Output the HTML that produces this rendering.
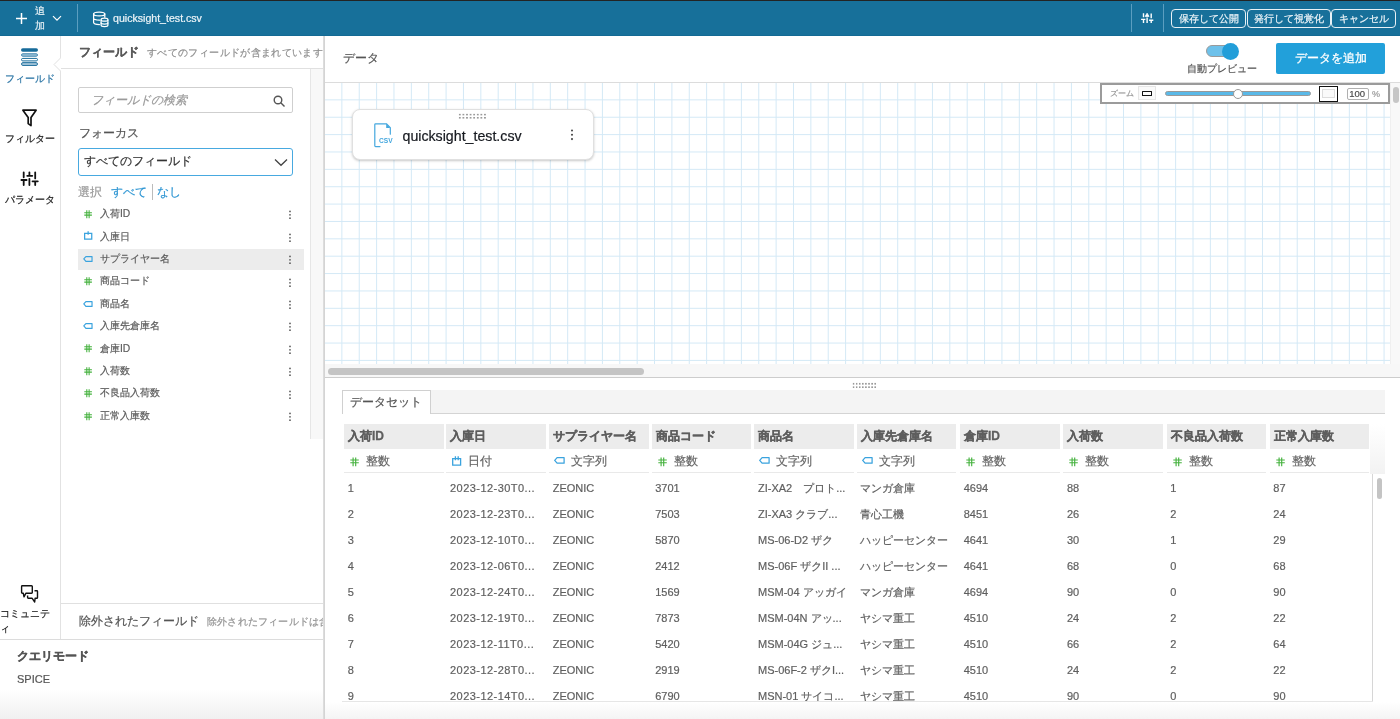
<!DOCTYPE html>
<html><head><meta charset="utf-8"><style>
*{box-sizing:border-box;margin:0;padding:0}
html,body{width:1400px;height:719px;overflow:hidden;background:#fff;font-family:"Liberation Sans",sans-serif;color:#555555}
#wrap{position:absolute;left:0;top:0;width:1400px;height:719px;overflow:hidden;will-change:transform;-webkit-text-stroke-width:0.2px}
.a{position:absolute;white-space:nowrap}
/* top bar */
#top{position:absolute;left:0;top:0;width:1400px;height:36px;background:#17709a;border-top:1px solid #232323;border-bottom:1px solid #136a94;z-index:5}
#top .sep{position:absolute;top:3px;width:1px;height:28px;background:#5b9ec0}
#top .btn{position:absolute;top:8px;height:18.8px;border:1.5px solid #e8f1f6;border-radius:4px;color:#eef5f9;font-size:9.7px;line-height:17.5px;text-align:center}
/* nav */
#nav{position:absolute;left:0;top:35px;width:61px;height:604px;border-right:1px solid #e2e2e2;background:#fff}
.nl{position:absolute;left:0;width:60px;text-align:center;font-size:10px;line-height:12px;color:#222}
/* fields panel */
#fp{position:absolute;left:61px;top:35px;width:262px;height:604px;background:#fff}
.fi{position:absolute;left:17px;width:226px;height:21px}
.fi.sel{background:#ececec}
.fi .ti{position:absolute;left:6px;top:6px}
.fi .str{left:5px;top:7.5px}
.fi .date{top:5px}
.fi span{position:absolute;left:22px;top:-0.7px;font-size:10.3px;line-height:21px;color:#5c5c5c}
.keb{position:absolute;left:210px;top:5.5px}
/* main */
#main{position:absolute;left:323px;top:35px;width:2px;height:684px;background:linear-gradient(to right,#e0e0e0,#d0d0d0)}
.grid{position:absolute;left:325px;top:83px}
.th{position:absolute;top:424px;height:25px;background:#ececec;font-size:12px;font-weight:bold;line-height:25px;padding-left:4px;color:#5e5e5e;white-space:nowrap;overflow:hidden;-webkit-text-stroke-width:0.3px}
.tt{position:absolute;top:449px;height:24px;border-bottom:1px solid #e9e9e9;font-size:12px;line-height:23px;white-space:nowrap}
.tt .ti{position:absolute;left:6px;top:7.5px}
.tt .str{left:5px;top:8px}
.tt .date{top:6.5px}
.tt span{position:absolute;left:22px;top:1px;color:#666}
.td{position:absolute;height:26px;font-size:11px;line-height:26px;color:#5f5f5f;white-space:nowrap}

</style></head><body><div id="wrap">
<div id="top">
  <svg class="a" style="left:15px;top:11px" width="13" height="13" viewBox="0 0 13 13"><path d="M6.5 1V12M1 6.5H12" stroke="#fff" stroke-width="1.5"/></svg>
  <div class="a" style="left:35px;top:3px;width:12px;font-size:10px;line-height:14.5px;color:#e6f0f5;white-space:normal">追<br>加</div>
  <svg class="a" style="left:52px;top:14px" width="10" height="7" viewBox="0 0 10 7"><path d="M1 1.2L5 5.2L9 1.2" stroke="#fff" stroke-width="1.2" fill="none"/></svg>
  <div class="sep" style="left:77px"></div>
  <svg class="a" style="left:88px;top:6px" width="24" height="24" viewBox="0 0 24 24"><g stroke="#fff" stroke-width="1.25" fill="none" stroke-linecap="round"><ellipse cx="11.2" cy="6.9" rx="5.6" ry="1.9"/><path d="M5.6 6.9V15.6Q5.6 17.5 11.5 17.6M5.6 11.3Q5.6 13 11.5 13.2M16.8 6.9V10.2"/><path d="M13.1 12.6Q13.1 11.2 16.5 11.2Q19.9 11.2 19.9 12.6V18.3Q19.9 19.6 16.5 19.6Q13.1 19.6 13.1 18.3Z" fill="#17709a"/><path d="M13.1 13Q13.1 14.2 16.5 14.2Q19.9 14.2 19.9 13M13.1 15.9Q13.1 17 16.5 17Q19.9 17 19.9 15.9"/></g></svg>
  <div class="a" style="left:113px;top:10px;font-size:10.6px;line-height:14px;color:#eef5f9">quicksight_test.csv</div>
  <div class="sep" style="left:1131px"></div>
  <svg class="a" style="left:1138px;top:9px" width="18" height="16" viewBox="0 0 18 16"><g stroke="#fff" stroke-width="1.4" fill="none"><path d="M5.5 3.2V7.2M3.1 9.4H7.4M5.5 9.4V13M9.1 7.5V13M13.2 3.5V8.2M11.1 10.3H15.3M13.2 10.3V13"/><path d="M7.2 6.4L9.1 3.2L11 6.4Z" fill="#fff" stroke-width="0.8"/></g></svg>
  <div class="sep" style="left:1163px"></div>
  <div class="btn" style="left:1171px;width:75px">保存して公開</div>
  <div class="btn" style="left:1246.5px;width:84px">発行して視覚化</div>
  <div class="btn" style="left:1331px;width:65px">キャンセル</div>
</div>

<div id="nav">
  <svg class="a" style="left:20px;top:12px" width="19" height="20" viewBox="0 0 19 20"><rect x="1" y="1.3" width="17" height="3.5" rx="1.75" fill="#176b9a"/><rect x="1.5" y="6.7" width="16" height="2.6" rx="1.3" fill="#93bcd3" stroke="#3f86b0" stroke-width="0.9"/><rect x="1.5" y="11.4" width="16" height="2.5" rx="1.25" fill="#fff" stroke="#176b9a" stroke-width="1"/><rect x="1.5" y="15.6" width="16" height="2.9" rx="1.45" fill="#9cc0d6" stroke="#2a77a3" stroke-width="1"/></svg>
  <div class="nl" style="top:38px;color:#2a74a4">フィールド</div>
  <svg class="a" style="left:18px;top:71px" width="24" height="24" viewBox="0 0 24 24"><path d="M4.9 4.2H18.1L13 11.4V19.6L10.2 17.6V11.4Z" stroke="#111" stroke-width="1.7" fill="none" stroke-linejoin="round"/></svg>
  <div class="nl" style="top:98px">フィルター</div>
  <svg class="a" style="left:18px;top:133px" width="24" height="20" viewBox="0 0 24 20"><g stroke="#111" stroke-width="1.8" stroke-linecap="round" fill="none"><path d="M5.7 4.3V9.3M3.4 12H8.6M5.7 12V17M11.4 4.3V7.6M9.2 7.8H14.3M11.4 10.8V17M17.2 4.3V10.4M14.5 13.3H19.8M17.2 13.3V17"/></g></svg>
  <div class="nl" style="top:159px">パラメータ</div>
  <svg class="a" style="left:20px;top:549px" width="19" height="20" viewBox="0 0 19 20"><g stroke="#111" stroke-width="1.4" fill="none" stroke-linejoin="round"><path d="M2 1.8H11.5Q12.3 1.8 12.3 2.6V8.6Q12.3 9.2 11.5 9.2H6L4 12.8L3.3 9.2H2.3Q1.6 9.2 1.6 8.5V2.5Q1.6 1.8 2.3 1.8Z"/><path d="M14.5 6.8H16.8Q17.5 6.8 17.5 7.5V13.4Q17.5 14.2 16.8 14.2H15.1L14.7 18L12 14.2H8.3Q7.6 14.2 7.6 13.5V11.6"/></g></svg>
  <div class="nl" style="top:572px;text-align:left;left:0;width:58px;white-space:normal;line-height:14.5px;letter-spacing:0">コミュニテ<br>ィ</div>
</div>
<!-- notch -->
<svg class="a" style="left:53px;top:57px" width="9" height="16" viewBox="0 0 9 16"><path d="M8 0.5L1 7.5L8 14.5" fill="#fff" stroke="#e0e0e0" stroke-width="1"/><rect x="8" y="0" width="2" height="16" fill="#fff"/></svg>

<div id="fp">
  <div class="a" style="left:18px;top:10px;font-size:12px;font-weight:bold;line-height:15px;color:#5a5a5a;-webkit-text-stroke-width:0.25px">フィールド</div>
  <div class="a" style="left:86px;top:11px;font-size:10px;letter-spacing:0.36px;line-height:14px;color:#8f8f8f">すべてのフィールドが含まれています</div>
  <div class="a" style="left:0;top:33px;width:262px;height:1px;background:#e0e0e0"></div>
  <div class="a" style="left:249px;top:34px;width:13px;height:370px;background:#f8f8f8;border-left:1px solid #e6e6e6"></div>
  <div class="a" style="left:17px;top:52px;width:215px;height:26px;border:1px solid #cfcfcf;border-radius:2px"></div>
  <div class="a" style="left:30px;top:57px;font-size:12px;line-height:16px;font-style:italic;color:#9a9a9a">フィールドの検索</div>
  <svg class="a" style="left:212px;top:60px" width="13" height="13" viewBox="0 0 13 13"><g stroke="#555" stroke-width="1.4" fill="none"><circle cx="5" cy="5" r="3.8"/><path d="M7.8 7.8L11.5 11.5"/></g></svg>
  <div class="a" style="left:18px;top:91px;font-size:12px;line-height:15px;color:#555555">フォーカス</div>
  <div class="a" style="left:17px;top:112.5px;width:215px;height:28.5px;border:1.2px solid #47a9e0;border-radius:3px"></div>
  <div class="a" style="left:23px;top:118px;font-size:12px;line-height:17px;color:#333">すべてのフィールド</div>
  <svg class="a" style="left:213px;top:123px" width="14" height="9" viewBox="0 0 14 9"><path d="M1 1.5L7 7.3L13 1.5" stroke="#444" stroke-width="1.3" fill="none"/></svg>
  <div class="a" style="left:17px;top:150px;font-size:12px;line-height:15px;color:#999">選択</div>
  <div class="a" style="left:50px;top:150px;font-size:12px;line-height:15px;color:#2f96d3">すべて</div>
  <div class="a" style="left:91px;top:149px;width:1px;height:16px;background:#bbb"></div>
  <div class="a" style="left:96px;top:150px;font-size:12px;line-height:15px;color:#2f96d3">なし</div>
</div>
<div id="fields" class="a" style="left:61px;top:0"><div class="fi" style="top:203.9px"><svg class="ti num" width="9" height="9" viewBox="0 0 10 10"><g stroke="#46b23f" stroke-width="1.2" fill="none"><path d="M3.1 0.4V9.2M5.7 0.4V9.2M0.3 3H8.8M0.3 5.7H8.8"/></g></svg><span>入荷ID</span><svg class="keb" width="4" height="12" viewBox="0 0 4 12"><g fill="#555"><circle cx="2" cy="2.4" r="0.85"/><circle cx="2" cy="5.8" r="0.85"/><circle cx="2" cy="9.2" r="0.85"/></g></svg></div><div class="fi" style="top:226.3px"><svg class="ti date" width="9" height="9" viewBox="0 0 10 10"><g stroke="#3aa3de" stroke-width="1.4" fill="none"><path d="M0.7 2.6H8.6V9.1H0.7Z"/><path d="M4.6 0.2V4.2"/></g></svg><span>入庫日</span><svg class="keb" width="4" height="12" viewBox="0 0 4 12"><g fill="#555"><circle cx="2" cy="2.4" r="0.85"/><circle cx="2" cy="5.8" r="0.85"/><circle cx="2" cy="9.2" r="0.85"/></g></svg></div><div class="fi sel" style="top:248.7px"><svg class="ti str" width="10" height="7" viewBox="0 0 11 8"><path d="M0.7 3.4L3.1 0.7H10.1V6.2H3.1Z" stroke="#3aa3de" stroke-width="1.35" fill="none" stroke-linejoin="round"/></svg><span>サプライヤー名</span><svg class="keb" width="4" height="12" viewBox="0 0 4 12"><g fill="#555"><circle cx="2" cy="2.4" r="0.85"/><circle cx="2" cy="5.8" r="0.85"/><circle cx="2" cy="9.2" r="0.85"/></g></svg></div><div class="fi" style="top:271.1px"><svg class="ti num" width="9" height="9" viewBox="0 0 10 10"><g stroke="#46b23f" stroke-width="1.2" fill="none"><path d="M3.1 0.4V9.2M5.7 0.4V9.2M0.3 3H8.8M0.3 5.7H8.8"/></g></svg><span>商品コード</span><svg class="keb" width="4" height="12" viewBox="0 0 4 12"><g fill="#555"><circle cx="2" cy="2.4" r="0.85"/><circle cx="2" cy="5.8" r="0.85"/><circle cx="2" cy="9.2" r="0.85"/></g></svg></div><div class="fi" style="top:293.5px"><svg class="ti str" width="10" height="7" viewBox="0 0 11 8"><path d="M0.7 3.4L3.1 0.7H10.1V6.2H3.1Z" stroke="#3aa3de" stroke-width="1.35" fill="none" stroke-linejoin="round"/></svg><span>商品名</span><svg class="keb" width="4" height="12" viewBox="0 0 4 12"><g fill="#555"><circle cx="2" cy="2.4" r="0.85"/><circle cx="2" cy="5.8" r="0.85"/><circle cx="2" cy="9.2" r="0.85"/></g></svg></div><div class="fi" style="top:315.9px"><svg class="ti str" width="10" height="7" viewBox="0 0 11 8"><path d="M0.7 3.4L3.1 0.7H10.1V6.2H3.1Z" stroke="#3aa3de" stroke-width="1.35" fill="none" stroke-linejoin="round"/></svg><span>入庫先倉庫名</span><svg class="keb" width="4" height="12" viewBox="0 0 4 12"><g fill="#555"><circle cx="2" cy="2.4" r="0.85"/><circle cx="2" cy="5.8" r="0.85"/><circle cx="2" cy="9.2" r="0.85"/></g></svg></div><div class="fi" style="top:338.3px"><svg class="ti num" width="9" height="9" viewBox="0 0 10 10"><g stroke="#46b23f" stroke-width="1.2" fill="none"><path d="M3.1 0.4V9.2M5.7 0.4V9.2M0.3 3H8.8M0.3 5.7H8.8"/></g></svg><span>倉庫ID</span><svg class="keb" width="4" height="12" viewBox="0 0 4 12"><g fill="#555"><circle cx="2" cy="2.4" r="0.85"/><circle cx="2" cy="5.8" r="0.85"/><circle cx="2" cy="9.2" r="0.85"/></g></svg></div><div class="fi" style="top:360.7px"><svg class="ti num" width="9" height="9" viewBox="0 0 10 10"><g stroke="#46b23f" stroke-width="1.2" fill="none"><path d="M3.1 0.4V9.2M5.7 0.4V9.2M0.3 3H8.8M0.3 5.7H8.8"/></g></svg><span>入荷数</span><svg class="keb" width="4" height="12" viewBox="0 0 4 12"><g fill="#555"><circle cx="2" cy="2.4" r="0.85"/><circle cx="2" cy="5.8" r="0.85"/><circle cx="2" cy="9.2" r="0.85"/></g></svg></div><div class="fi" style="top:383.1px"><svg class="ti num" width="9" height="9" viewBox="0 0 10 10"><g stroke="#46b23f" stroke-width="1.2" fill="none"><path d="M3.1 0.4V9.2M5.7 0.4V9.2M0.3 3H8.8M0.3 5.7H8.8"/></g></svg><span>不良品入荷数</span><svg class="keb" width="4" height="12" viewBox="0 0 4 12"><g fill="#555"><circle cx="2" cy="2.4" r="0.85"/><circle cx="2" cy="5.8" r="0.85"/><circle cx="2" cy="9.2" r="0.85"/></g></svg></div><div class="fi" style="top:405.5px"><svg class="ti num" width="9" height="9" viewBox="0 0 10 10"><g stroke="#46b23f" stroke-width="1.2" fill="none"><path d="M3.1 0.4V9.2M5.7 0.4V9.2M0.3 3H8.8M0.3 5.7H8.8"/></g></svg><span>正常入庫数</span><svg class="keb" width="4" height="12" viewBox="0 0 4 12"><g fill="#555"><circle cx="2" cy="2.4" r="0.85"/><circle cx="2" cy="5.8" r="0.85"/><circle cx="2" cy="9.2" r="0.85"/></g></svg></div></div>
<div class="a" style="left:61px;top:603px;width:262px;height:1px;background:#e0e0e0"></div>
<div class="a" style="left:79px;top:614px;font-size:12px;line-height:15px;color:#555555">除外されたフィールド</div>
<div class="a" style="left:207px;top:615px;width:116px;overflow:hidden;font-size:10px;letter-spacing:0.2px;line-height:14px;color:#959595">除外されたフィールドは含まれていません</div>
<div class="a" style="left:0;top:639px;width:323px;height:1px;background:#dcdcdc"></div>
<div class="a" style="left:17px;top:649px;font-size:12px;font-weight:bold;line-height:15px;color:#555555;-webkit-text-stroke-width:0.3px">クエリモード</div>
<div class="a" style="left:17px;top:672px;font-size:11px;line-height:14px;color:#555555">SPICE</div>
<div class="a" style="left:0;top:690px;width:323px;height:29px;background:linear-gradient(#fff,#f0f0f0)"></div>

<div id="main">
</div>
<div class="a" style="left:343px;top:50px;font-size:12px;line-height:16px;color:#555555">データ</div>
<!-- toggle -->
<div class="a" style="left:1206px;top:45px;width:30px;height:12px;border-radius:6px;background:#6ec1ea;border:1px solid #9a9a9a"></div>
<div class="a" style="left:1221.5px;top:42.5px;width:17.4px;height:17.4px;border-radius:50%;background:#229ed9"></div>
<div class="a" style="left:1186.5px;top:61.5px;font-size:10.2px;line-height:13px;color:#555555">自動プレビュー</div>
<div class="a" style="left:1276px;top:43px;width:109px;height:30.5px;background:#22a0da;border-radius:2px;color:#fff;font-size:12px;line-height:30px;text-align:center;-webkit-text-stroke:0.3px #fff">データを追加</div>
<div class="a" style="left:325px;top:82px;width:1075px;height:1px;background:#dcdcdc"></div>
<svg class="grid" width="1065" height="281" viewBox="0 0 1065 281"><g stroke="#d4e9f6" stroke-width="1"><line x1="-0.50" y1="0" x2="-0.50" y2="281"/><line x1="16.87" y1="0" x2="16.87" y2="281"/><line x1="34.24" y1="0" x2="34.24" y2="281"/><line x1="51.61" y1="0" x2="51.61" y2="281"/><line x1="68.98" y1="0" x2="68.98" y2="281"/><line x1="86.35" y1="0" x2="86.35" y2="281"/><line x1="103.72" y1="0" x2="103.72" y2="281"/><line x1="121.09" y1="0" x2="121.09" y2="281"/><line x1="138.46" y1="0" x2="138.46" y2="281"/><line x1="155.83" y1="0" x2="155.83" y2="281"/><line x1="173.20" y1="0" x2="173.20" y2="281"/><line x1="190.57" y1="0" x2="190.57" y2="281"/><line x1="207.94" y1="0" x2="207.94" y2="281"/><line x1="225.31" y1="0" x2="225.31" y2="281"/><line x1="242.68" y1="0" x2="242.68" y2="281"/><line x1="260.05" y1="0" x2="260.05" y2="281"/><line x1="277.42" y1="0" x2="277.42" y2="281"/><line x1="294.79" y1="0" x2="294.79" y2="281"/><line x1="312.16" y1="0" x2="312.16" y2="281"/><line x1="329.53" y1="0" x2="329.53" y2="281"/><line x1="346.90" y1="0" x2="346.90" y2="281"/><line x1="364.27" y1="0" x2="364.27" y2="281"/><line x1="381.64" y1="0" x2="381.64" y2="281"/><line x1="399.01" y1="0" x2="399.01" y2="281"/><line x1="416.38" y1="0" x2="416.38" y2="281"/><line x1="433.75" y1="0" x2="433.75" y2="281"/><line x1="451.12" y1="0" x2="451.12" y2="281"/><line x1="468.49" y1="0" x2="468.49" y2="281"/><line x1="485.86" y1="0" x2="485.86" y2="281"/><line x1="503.23" y1="0" x2="503.23" y2="281"/><line x1="520.60" y1="0" x2="520.60" y2="281"/><line x1="537.97" y1="0" x2="537.97" y2="281"/><line x1="555.34" y1="0" x2="555.34" y2="281"/><line x1="572.71" y1="0" x2="572.71" y2="281"/><line x1="590.08" y1="0" x2="590.08" y2="281"/><line x1="607.45" y1="0" x2="607.45" y2="281"/><line x1="624.82" y1="0" x2="624.82" y2="281"/><line x1="642.19" y1="0" x2="642.19" y2="281"/><line x1="659.56" y1="0" x2="659.56" y2="281"/><line x1="676.93" y1="0" x2="676.93" y2="281"/><line x1="694.30" y1="0" x2="694.30" y2="281"/><line x1="711.67" y1="0" x2="711.67" y2="281"/><line x1="729.04" y1="0" x2="729.04" y2="281"/><line x1="746.41" y1="0" x2="746.41" y2="281"/><line x1="763.78" y1="0" x2="763.78" y2="281"/><line x1="781.15" y1="0" x2="781.15" y2="281"/><line x1="798.52" y1="0" x2="798.52" y2="281"/><line x1="815.89" y1="0" x2="815.89" y2="281"/><line x1="833.26" y1="0" x2="833.26" y2="281"/><line x1="850.63" y1="0" x2="850.63" y2="281"/><line x1="868.00" y1="0" x2="868.00" y2="281"/><line x1="885.37" y1="0" x2="885.37" y2="281"/><line x1="902.74" y1="0" x2="902.74" y2="281"/><line x1="920.11" y1="0" x2="920.11" y2="281"/><line x1="937.48" y1="0" x2="937.48" y2="281"/><line x1="954.85" y1="0" x2="954.85" y2="281"/><line x1="972.22" y1="0" x2="972.22" y2="281"/><line x1="989.59" y1="0" x2="989.59" y2="281"/><line x1="1006.96" y1="0" x2="1006.96" y2="281"/><line x1="1024.33" y1="0" x2="1024.33" y2="281"/><line x1="1041.70" y1="0" x2="1041.70" y2="281"/><line x1="1059.07" y1="0" x2="1059.07" y2="281"/><line x1="0" y1="-0.50" x2="1065" y2="-0.50"/><line x1="0" y1="16.87" x2="1065" y2="16.87"/><line x1="0" y1="34.24" x2="1065" y2="34.24"/><line x1="0" y1="51.61" x2="1065" y2="51.61"/><line x1="0" y1="68.98" x2="1065" y2="68.98"/><line x1="0" y1="86.35" x2="1065" y2="86.35"/><line x1="0" y1="103.72" x2="1065" y2="103.72"/><line x1="0" y1="121.09" x2="1065" y2="121.09"/><line x1="0" y1="138.46" x2="1065" y2="138.46"/><line x1="0" y1="155.83" x2="1065" y2="155.83"/><line x1="0" y1="173.20" x2="1065" y2="173.20"/><line x1="0" y1="190.57" x2="1065" y2="190.57"/><line x1="0" y1="207.94" x2="1065" y2="207.94"/><line x1="0" y1="225.31" x2="1065" y2="225.31"/><line x1="0" y1="242.68" x2="1065" y2="242.68"/><line x1="0" y1="260.05" x2="1065" y2="260.05"/><line x1="0" y1="277.42" x2="1065" y2="277.42"/></g></svg>
<!-- zoom control -->
<div class="a" style="left:1099.5px;top:83px;width:290px;height:20.5px;background:#fff;border:2px solid #9b9b9b"></div>
<div class="a" style="left:1109.5px;top:87.5px;font-size:8px;line-height:12px;color:#9a9a9a">ズーム</div>
<div class="a" style="left:1137.5px;top:86px;width:18px;height:14px;border:1px solid #e6e6e6;background:#fafafa"></div>
<div class="a" style="left:1141.5px;top:90.5px;width:10px;height:5.5px;border:1.6px solid #111;border-radius:0.5px"></div>
<div class="a" style="left:1164.5px;top:91px;width:146px;height:5px;border-radius:3px;background:#5ab9e8;border:1px solid #999"></div>
<div class="a" style="left:1232.5px;top:88.5px;width:10px;height:10px;border-radius:50%;background:#fff;border:1px solid #999"></div>
<div class="a" style="left:1319px;top:86px;width:19px;height:15.5px;border:1.5px solid #111;background:#fff"></div>
<div class="a" style="left:1322px;top:89px;width:13px;height:9px;border:1px solid #ddd;background:#fafafa"></div>
<div class="a" style="left:1347px;top:87.5px;width:21.5px;height:12px;border:1px solid #b0b0b0;border-radius:2px;font-size:9.5px;line-height:10px;text-align:right;padding-right:2.5px;color:#4a4a4a">100</div>
<div class="a" style="left:1372px;top:88px;font-size:9px;line-height:12px;color:#999">%</div>
<!-- v scrollbar of canvas -->
<div class="a" style="left:1390px;top:83px;width:10px;height:281px;background:#f8f8f8;border-left:1px solid #efefef"></div>
<div class="a" style="left:1393px;top:86.5px;width:6px;height:16px;border-radius:3px;background:#c6c6c6"></div>
<!-- card -->
<div class="a" style="left:351.5px;top:109px;width:242px;height:51.3px;background:#fff;border-radius:8px;border:1px solid #e0e0e0;box-shadow:0 1px 2.5px rgba(0,0,0,0.22)"></div>
<div class="a" style="left:458px;top:112.7px;width:28.8px;height:6.4px;background:radial-gradient(circle,#9a9a9a 0.75px,transparent 1px) 0 0/3.6px 3.2px"></div>
<svg class="a" style="left:372px;top:122px" width="24" height="27" viewBox="0 0 24 27"><g fill="none" stroke="#44a7de" stroke-width="1.2" stroke-linejoin="round" stroke-linecap="round"><path d="M8 24.6H3.6Q2.8 24.6 2.8 23.8V2.6Q2.8 1.8 3.6 1.8H14.4L18.3 5.6V12.2"/></g><path d="M14.2 1.8L18.3 5.9H14.2Z" fill="#44a7de"/><text x="7" y="20.8" font-family="Liberation Sans" font-weight="bold" font-size="6.6" fill="#44a7de">CSV</text></svg>
<div class="a" style="left:402.5px;top:127px;font-size:14.2px;line-height:18px;color:#16191f">quicksight_test.csv</div>
<svg class="a" style="left:570px;top:128px" width="4" height="14" viewBox="0 0 4 14"><g fill="#4a4a4a"><circle cx="2" cy="2.5" r="1.05"/><circle cx="2" cy="6.8" r="1.05"/><circle cx="2" cy="11.1" r="1.05"/></g></svg>
<!-- h scroll -->
<div class="a" style="left:325px;top:364px;width:1075px;height:13px;background:#f7f7f7"></div>
<div class="a" style="left:327.5px;top:368px;width:316px;height:7px;border-radius:4px;background:#c4c4c4"></div>
<div class="a" style="left:325px;top:377px;width:1075px;height:1px;background:#cdcdcd"></div>
<div class="a" style="left:852px;top:381.5px;width:25px;height:6px;background:radial-gradient(circle,#999 0.8px,transparent 1px) 0 0/3.1px 3.5px"></div>
<!-- tab bar -->
<div class="a" style="left:342px;top:390px;width:1043px;height:24px;background:#f4f4f4;border-bottom:1px solid #d4d4d4"></div>
<div class="a" style="left:342px;top:390px;width:89px;height:24px;background:#fff;border:1px solid #d0d0d0;border-bottom:none"></div>
<div class="a" style="left:350px;top:394px;font-size:12px;line-height:16px;color:#555555">データセット</div>
<div class="th" style="left:344px;width:99.6px">入荷ID</div><div class="tt" style="left:344px;width:99.6px"><svg class="ti num" width="10" height="10" viewBox="0 0 10 10"><g stroke="#46b23f" stroke-width="1.15" fill="none"><path d="M3.1 0.4V9.2M5.7 0.4V9.2M0.3 3H8.8M0.3 5.7H8.8"/></g></svg><span>整数</span></div><div class="td" style="left:347.7px;top:475px">1</div><div class="td" style="left:347.7px;top:501px">2</div><div class="td" style="left:347.7px;top:527px">3</div><div class="td" style="left:347.7px;top:553px">4</div><div class="td" style="left:347.7px;top:579px">5</div><div class="td" style="left:347.7px;top:605px">6</div><div class="td" style="left:347.7px;top:631px">7</div><div class="td" style="left:347.7px;top:657px">8</div><div class="td" style="left:347.7px;top:683px">9</div><div class="th" style="left:446.3px;width:99.6px">入庫日</div><div class="tt" style="left:446.3px;width:99.6px"><svg class="ti date" width="10" height="10" viewBox="0 0 10 10"><g stroke="#3aa3de" stroke-width="1.3" fill="none"><path d="M0.7 2.6H8.6V9.1H0.7Z"/><path d="M3.4 0.2V4.2M6.2 0.2V4.2"/></g></svg><span>日付</span></div><div class="td" style="left:450.0px;top:475px;letter-spacing:0.45px">2023-12-30T0...</div><div class="td" style="left:450.0px;top:501px;letter-spacing:0.45px">2023-12-23T0...</div><div class="td" style="left:450.0px;top:527px;letter-spacing:0.45px">2023-12-10T0...</div><div class="td" style="left:450.0px;top:553px;letter-spacing:0.45px">2023-12-06T0...</div><div class="td" style="left:450.0px;top:579px;letter-spacing:0.45px">2023-12-24T0...</div><div class="td" style="left:450.0px;top:605px;letter-spacing:0.45px">2023-12-19T0...</div><div class="td" style="left:450.0px;top:631px;letter-spacing:0.45px">2023-12-11T0...</div><div class="td" style="left:450.0px;top:657px;letter-spacing:0.45px">2023-12-28T0...</div><div class="td" style="left:450.0px;top:683px;letter-spacing:0.45px">2023-12-14T0...</div><div class="th" style="left:549px;width:99.6px">サプライヤー名</div><div class="tt" style="left:549px;width:99.6px"><svg class="ti str" width="11" height="8" viewBox="0 0 11 8"><path d="M0.7 3.4L3.1 0.7H10.1V6.2H3.1Z" stroke="#3aa3de" stroke-width="1.25" fill="none" stroke-linejoin="round"/></svg><span>文字列</span></div><div class="td" style="left:552.7px;top:475px">ZEONIC</div><div class="td" style="left:552.7px;top:501px">ZEONIC</div><div class="td" style="left:552.7px;top:527px">ZEONIC</div><div class="td" style="left:552.7px;top:553px">ZEONIC</div><div class="td" style="left:552.7px;top:579px">ZEONIC</div><div class="td" style="left:552.7px;top:605px">ZEONIC</div><div class="td" style="left:552.7px;top:631px">ZEONIC</div><div class="td" style="left:552.7px;top:657px">ZEONIC</div><div class="td" style="left:552.7px;top:683px">ZEONIC</div><div class="th" style="left:651.5px;width:99.6px">商品コード</div><div class="tt" style="left:651.5px;width:99.6px"><svg class="ti num" width="10" height="10" viewBox="0 0 10 10"><g stroke="#46b23f" stroke-width="1.15" fill="none"><path d="M3.1 0.4V9.2M5.7 0.4V9.2M0.3 3H8.8M0.3 5.7H8.8"/></g></svg><span>整数</span></div><div class="td" style="left:655.2px;top:475px">3701</div><div class="td" style="left:655.2px;top:501px">7503</div><div class="td" style="left:655.2px;top:527px">5870</div><div class="td" style="left:655.2px;top:553px">2412</div><div class="td" style="left:655.2px;top:579px">1569</div><div class="td" style="left:655.2px;top:605px">7873</div><div class="td" style="left:655.2px;top:631px">5420</div><div class="td" style="left:655.2px;top:657px">2919</div><div class="td" style="left:655.2px;top:683px">6790</div><div class="th" style="left:754.3px;width:99.6px">商品名</div><div class="tt" style="left:754.3px;width:99.6px"><svg class="ti str" width="11" height="8" viewBox="0 0 11 8"><path d="M0.7 3.4L3.1 0.7H10.1V6.2H3.1Z" stroke="#3aa3de" stroke-width="1.25" fill="none" stroke-linejoin="round"/></svg><span>文字列</span></div><div class="td" style="left:758.0px;top:475px">ZI-XA2　プロト...</div><div class="td" style="left:758.0px;top:501px">ZI-XA3 クラブ...</div><div class="td" style="left:758.0px;top:527px">MS-06-D2 ザク</div><div class="td" style="left:758.0px;top:553px">MS-06F ザクII ...</div><div class="td" style="left:758.0px;top:579px">MSM-04 アッガイ</div><div class="td" style="left:758.0px;top:605px">MSM-04N アッ...</div><div class="td" style="left:758.0px;top:631px">MSM-04G ジュ...</div><div class="td" style="left:758.0px;top:657px">MS-06F-2 ザクI...</div><div class="td" style="left:758.0px;top:683px">MSN-01 サイコ...</div><div class="th" style="left:856.7px;width:99.6px">入庫先倉庫名</div><div class="tt" style="left:856.7px;width:99.6px"><svg class="ti str" width="11" height="8" viewBox="0 0 11 8"><path d="M0.7 3.4L3.1 0.7H10.1V6.2H3.1Z" stroke="#3aa3de" stroke-width="1.25" fill="none" stroke-linejoin="round"/></svg><span>文字列</span></div><div class="td" style="left:860.4000000000001px;top:475px">マンガ倉庫</div><div class="td" style="left:860.4000000000001px;top:501px">青心工機</div><div class="td" style="left:860.4000000000001px;top:527px">ハッピーセンター</div><div class="td" style="left:860.4000000000001px;top:553px">ハッピーセンター</div><div class="td" style="left:860.4000000000001px;top:579px">マンガ倉庫</div><div class="td" style="left:860.4000000000001px;top:605px">ヤシマ重工</div><div class="td" style="left:860.4000000000001px;top:631px">ヤシマ重工</div><div class="td" style="left:860.4000000000001px;top:657px">ヤシマ重工</div><div class="td" style="left:860.4000000000001px;top:683px">ヤシマ重工</div><div class="th" style="left:960px;width:99.6px">倉庫ID</div><div class="tt" style="left:960px;width:99.6px"><svg class="ti num" width="10" height="10" viewBox="0 0 10 10"><g stroke="#46b23f" stroke-width="1.15" fill="none"><path d="M3.1 0.4V9.2M5.7 0.4V9.2M0.3 3H8.8M0.3 5.7H8.8"/></g></svg><span>整数</span></div><div class="td" style="left:963.7px;top:475px">4694</div><div class="td" style="left:963.7px;top:501px">8451</div><div class="td" style="left:963.7px;top:527px">4641</div><div class="td" style="left:963.7px;top:553px">4641</div><div class="td" style="left:963.7px;top:579px">4694</div><div class="td" style="left:963.7px;top:605px">4510</div><div class="td" style="left:963.7px;top:631px">4510</div><div class="td" style="left:963.7px;top:657px">4510</div><div class="td" style="left:963.7px;top:683px">4510</div><div class="th" style="left:1063.2px;width:99.6px">入荷数</div><div class="tt" style="left:1063.2px;width:99.6px"><svg class="ti num" width="10" height="10" viewBox="0 0 10 10"><g stroke="#46b23f" stroke-width="1.15" fill="none"><path d="M3.1 0.4V9.2M5.7 0.4V9.2M0.3 3H8.8M0.3 5.7H8.8"/></g></svg><span>整数</span></div><div class="td" style="left:1066.9px;top:475px">88</div><div class="td" style="left:1066.9px;top:501px">26</div><div class="td" style="left:1066.9px;top:527px">30</div><div class="td" style="left:1066.9px;top:553px">68</div><div class="td" style="left:1066.9px;top:579px">90</div><div class="td" style="left:1066.9px;top:605px">24</div><div class="td" style="left:1066.9px;top:631px">66</div><div class="td" style="left:1066.9px;top:657px">24</div><div class="td" style="left:1066.9px;top:683px">90</div><div class="th" style="left:1166.5px;width:99.6px">不良品入荷数</div><div class="tt" style="left:1166.5px;width:99.6px"><svg class="ti num" width="10" height="10" viewBox="0 0 10 10"><g stroke="#46b23f" stroke-width="1.15" fill="none"><path d="M3.1 0.4V9.2M5.7 0.4V9.2M0.3 3H8.8M0.3 5.7H8.8"/></g></svg><span>整数</span></div><div class="td" style="left:1170.2px;top:475px">1</div><div class="td" style="left:1170.2px;top:501px">2</div><div class="td" style="left:1170.2px;top:527px">1</div><div class="td" style="left:1170.2px;top:553px">0</div><div class="td" style="left:1170.2px;top:579px">0</div><div class="td" style="left:1170.2px;top:605px">2</div><div class="td" style="left:1170.2px;top:631px">2</div><div class="td" style="left:1170.2px;top:657px">2</div><div class="td" style="left:1170.2px;top:683px">0</div><div class="th" style="left:1269.6px;width:99.6px">正常入庫数</div><div class="tt" style="left:1269.6px;width:99.6px"><svg class="ti num" width="10" height="10" viewBox="0 0 10 10"><g stroke="#46b23f" stroke-width="1.15" fill="none"><path d="M3.1 0.4V9.2M5.7 0.4V9.2M0.3 3H8.8M0.3 5.7H8.8"/></g></svg><span>整数</span></div><div class="td" style="left:1273.3px;top:475px">87</div><div class="td" style="left:1273.3px;top:501px">24</div><div class="td" style="left:1273.3px;top:527px">29</div><div class="td" style="left:1273.3px;top:553px">68</div><div class="td" style="left:1273.3px;top:579px">90</div><div class="td" style="left:1273.3px;top:605px">22</div><div class="td" style="left:1273.3px;top:631px">64</div><div class="td" style="left:1273.3px;top:657px">22</div><div class="td" style="left:1273.3px;top:683px">90</div>
<div class="a" style="left:1370px;top:424px;width:15px;height:50px;background:linear-gradient(#fff,#f2f2f2)"></div>
<div class="a" style="left:1372px;top:474px;width:1px;height:228px;background:#d6d6d6"></div>
<div class="a" style="left:1377px;top:478px;width:5px;height:21px;border-radius:3px;background:#c4c4c4"></div>
<div class="a" style="left:342px;top:701px;width:1031px;height:1px;background:#e6e6e6"></div>
<div class="a" style="left:325px;top:702px;width:1075px;height:17px;background:linear-gradient(#fff,#f4f4f4)"></div>

</div></body></html>
